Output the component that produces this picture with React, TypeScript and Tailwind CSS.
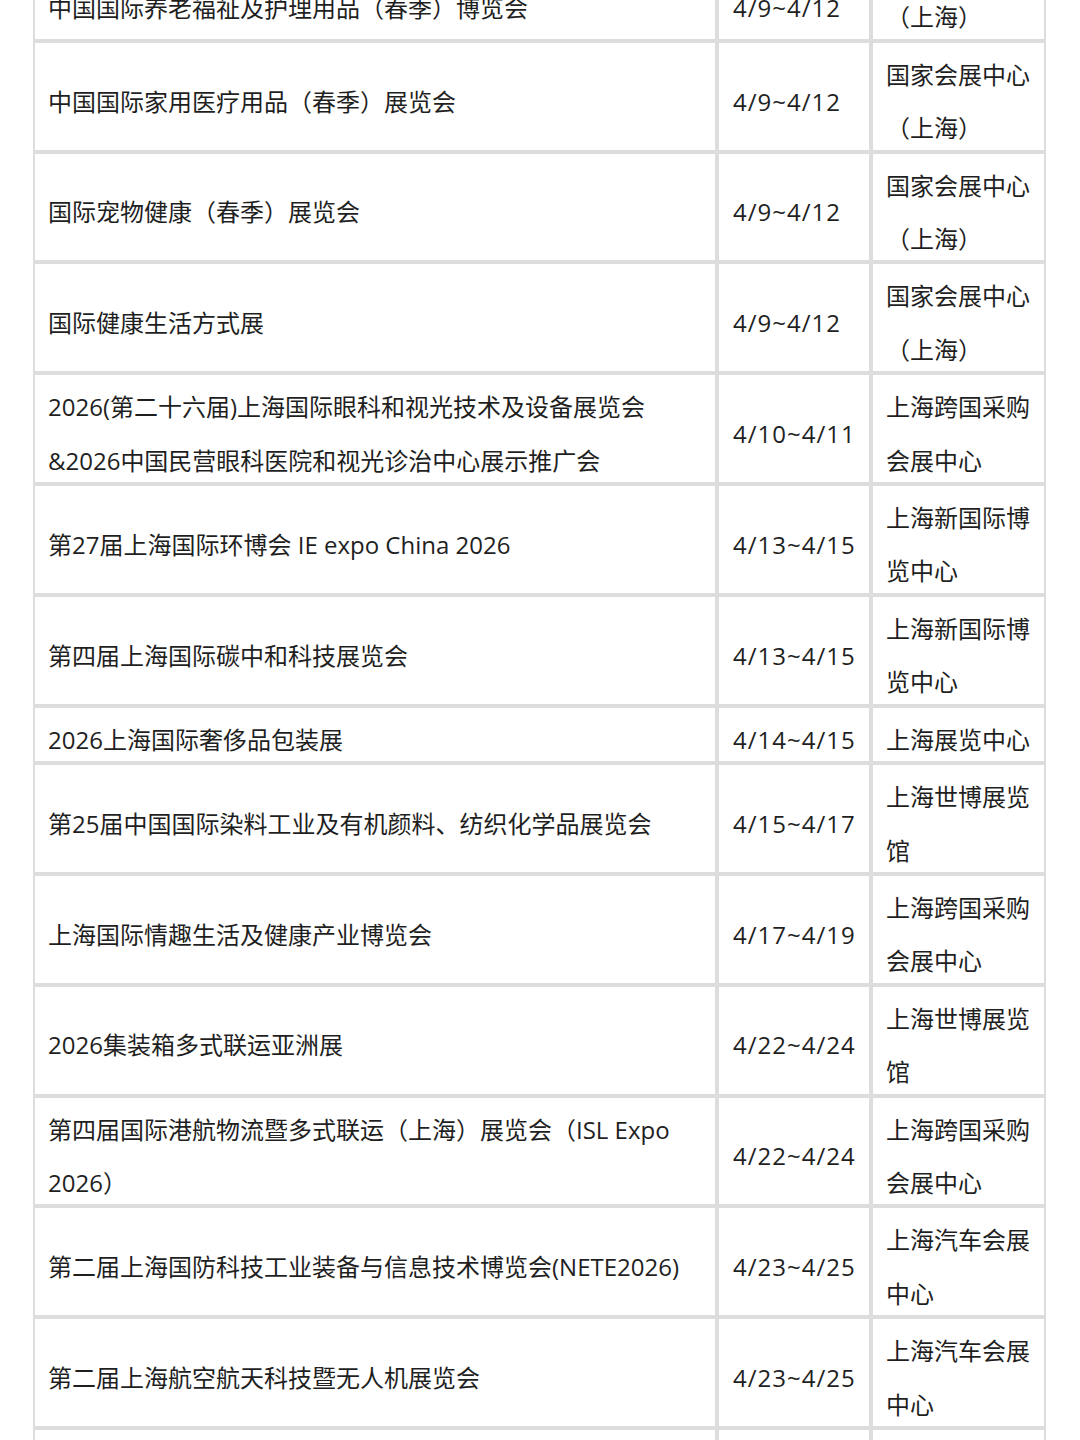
const rows: [string, string, string][] = [
  ["中国国际养老福祉及护理用品（春季）博览会", "4/9~4/12", "国家会展中心（上海）"],
  ["中国国际家用医疗用品（春季）展览会", "4/9~4/12", "国家会展中心（上海）"],
  ["国际宠物健康（春季）展览会", "4/9~4/12", "国家会展中心（上海）"],
  ["国际健康生活方式展", "4/9~4/12", "国家会展中心（上海）"],
  [
    "2026(第二十六届)上海国际眼科和视光技术及设备展览会&2026中国民营眼科医院和视光诊治中心展示推广会",
    "4/10~4/11",
    "上海跨国采购会展中心",
  ],
  ["第27届上海国际环博会 IE expo China 2026", "4/13~4/15", "上海新国际博览中心"],
  ["第四届上海国际碳中和科技展览会", "4/13~4/15", "上海新国际博览中心"],
  ["2026上海国际奢侈品包装展", "4/14~4/15", "上海展览中心"],
  ["第25届中国国际染料工业及有机颜料、纺织化学品展览会", "4/15~4/17", "上海世博展览馆"],
  ["上海国际情趣生活及健康产业博览会", "4/17~4/19", "上海跨国采购会展中心"],
  ["2026集装箱多式联运亚洲展", "4/22~4/24", "上海世博展览馆"],
  [
    "第四届国际港航物流暨多式联运（上海）展览会（ISL Expo 2026）",
    "4/22~4/24",
    "上海跨国采购会展中心",
  ],
  ["第二届上海国防科技工业装备与信息技术博览会(NETE2026)", "4/23~4/25", "上海汽车会展中心"],
  ["第二届上海航空航天科技暨无人机展览会", "4/23~4/25", "上海汽车会展中心"],
];

function Cell({
  children,
  pad = "px-[13px]",
  shift = "mt-[5px] -mb-[5px]",
}: {
  children?: React.ReactNode;
  pad?: string;
  shift?: string;
}) {
  return (
    <div className={`flex items-center border-2 border-[#dddddd] bg-white ${pad}`}>
      <div className={`w-full ${shift}`}>{children}</div>
    </div>
  );
}

export default function App() {
  return (
    <div className="h-[1440px] overflow-hidden bg-white font-['Open_Sans','Noto_Sans_CJK_SC',sans-serif] text-[24px] leading-[53.4px] text-[#1f1f1f]">
      <div className="ml-[33px] mt-[-70px] grid w-[1013px] grid-cols-[684px_154px_175px]">
        {rows.map(([name, date, venue], i) => {
          // the top row is cut by the page edge; its left cells sit lower
          const shift = i === 0 ? "mt-[22px] -mb-[22px]" : undefined;
          return (
            <div key={i} className="contents">
              <Cell shift={shift}>{name}</Cell>
              <Cell pad="px-[14px]" shift={shift}>
                <span className="whitespace-nowrap tracking-[1px]">{date}</span>
              </Cell>
              <Cell>{venue}</Cell>
            </div>
          );
        })}
        {/* next row, cut off by the bottom edge */}
        <div className="h-[110.8px] border-2 border-[#dddddd]" />
        <div className="h-[110.8px] border-2 border-[#dddddd]" />
        <div className="h-[110.8px] border-2 border-[#dddddd]" />
      </div>
    </div>
  );
}
